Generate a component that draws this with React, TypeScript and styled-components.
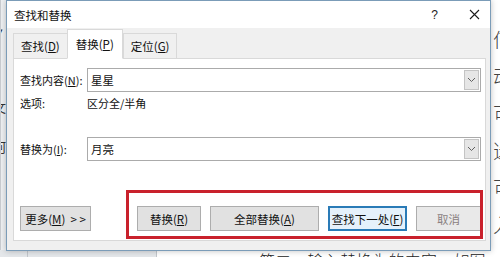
import styled, { createGlobalStyle } from "styled-components";

const GlobalStyle = createGlobalStyle`
  html, body { margin: 0; padding: 0; }
  body {
    font-family: "Noto Sans CJK SC", "Noto Sans", sans-serif;
    font-size: 11px;
    color: #000;
  }
`;

const CJK = `"Noto Sans CJK SC", "Noto Sans", sans-serif`;

const rightEnds = ["何", "动", "可", "选", "可", "入"];

function Chevron() {
  return (
    <svg width="9" height="6" viewBox="0 0 9 6">
      <path d="M1 1 L4.5 4.5 L8 1" fill="none" stroke="#606060" strokeWidth="1" />
    </svg>
  );
}

function CloseIcon() {
  return (
    <svg width="11" height="11" viewBox="0 0 11 11">
      <path d="M1 1 L10 10 M10 1 L1 10" stroke="#1a1a1a" strokeWidth="1.1" />
    </svg>
  );
}

function Combo({ value }: { value: string }) {
  return (
    <StyledCombo>
      <StyledComboText>{value}</StyledComboText>
      <StyledDrop>
        <Chevron />
      </StyledDrop>
    </StyledCombo>
  );
}

export default function App() {
  return (
    <>
      <GlobalStyle />
      <StyledPage>
        <StyledDoc>
          <StyledDocBody>
            <StyledGutter>
              <StyledGutterMark>▾</StyledGutterMark>
              <StyledGutterChar top={64}>文</StyledGutterChar>
              <StyledGutterChar top={26}>何</StyledGutterChar>
            </StyledGutter>
            <StyledDocFill />
            <StyledLineEnds>
              {rightEnds.map((c, i) => (
                <span key={i}>{c}</span>
              ))}
            </StyledLineEnds>
          </StyledDocBody>
          <StyledDocFoot>
            <StyledFootCell width={27} />
            <StyledFootCell width={128} />
            <StyledFootText>第二、输入替换为的内容，如图</StyledFootText>
          </StyledDocFoot>
        </StyledDoc>

        <StyledDialog>
          <StyledTitleBar>
            <StyledTitle>查找和替换</StyledTitle>
            <StyledTitleButtons>
              <StyledHelp>?</StyledHelp>
              <CloseIcon />
            </StyledTitleButtons>
          </StyledTitleBar>
          <StyledDialogBody>
            <StyledTabs>
              <StyledTab>
                查找(<u>D</u>)
              </StyledTab>
              <StyledTab active>
                替换(<u>P</u>)
              </StyledTab>
              <StyledTab>
                定位(<u>G</u>)
              </StyledTab>
            </StyledTabs>
            <StyledPanel>
              <StyledFieldRow>
                <StyledLabel>
                  查找内容(<u>N</u>):
                </StyledLabel>
                <Combo value="星星" />
              </StyledFieldRow>
              <StyledOptionRow>
                <StyledLabel>选项:</StyledLabel>
                <span>区分全/半角</span>
              </StyledOptionRow>
              <StyledFieldRow>
                <StyledLabel>
                  替换为(<u>I</u>):
                </StyledLabel>
                <Combo value="月亮" />
              </StyledFieldRow>
              <StyledButtonBar>
                <StyledButton width={71}>
                  更多(<u>M</u>)&nbsp;&nbsp;&gt; &gt;
                </StyledButton>
                <StyledActions>
                  <StyledButton width={64}>
                    替换(<u>R</u>)
                  </StyledButton>
                  <StyledButton width={109}>
                    全部替换(<u>A</u>)
                  </StyledButton>
                  <StyledButton width={79} primary>
                    查找下一处(<u>F</u>)
                  </StyledButton>
                  <StyledButton width={65} muted>
                    取消
                  </StyledButton>
                </StyledActions>
              </StyledButtonBar>
            </StyledPanel>
          </StyledDialogBody>
        </StyledDialog>

        <StyledHighlight />
      </StyledPage>
    </>
  );
}

const StyledPage = styled.div`
  position: relative;
  width: 500px;
  height: 257px;
  overflow: hidden;
  background: #ffffff;
`;

const StyledDoc = styled.div`
  display: flex;
  flex-direction: column;
  height: 100%;
`;

const StyledDocBody = styled.div`
  flex: 1;
  display: flex;
`;

const StyledGutter = styled.div`
  width: 6px;
  background: #eef0f2;
  border-left: 1px solid #c9ccd0;
  display: flex;
  flex-direction: column;
  overflow: hidden;
`;

const StyledGutterMark = styled.span`
  margin-top: 26px;
  font-size: 9px;
  color: #333;
  line-height: 10px;
  margin-left: -3px;
`;

const StyledGutterChar = styled.span<{ top: number }>`
  margin-top: ${(p) => p.top}px;
  margin-left: -8px;
  font-size: 13px;
  line-height: 14px;
  color: #333;
`;

const StyledDocFill = styled.div`
  flex: 1;
`;

const StyledLineEnds = styled.div`
  width: 8px;
  display: flex;
  flex-direction: column;
  gap: 17px;
  padding-top: 30px;
  overflow: hidden;
  font-family: ${CJK};
  font-size: 20px;
  line-height: 20px;
  font-weight: 300;
  color: #444;
  span {
    margin-left: 1px;
  }
`;

const StyledDocFoot = styled.div`
  height: 7px;
  display: flex;
  background: #ffffff;
`;

const StyledFootCell = styled.div<{ width: number }>`
  width: ${(p) => p.width}px;
  background: #e4e7ea;
  border-right: 1px solid #c3c7cc;
`;

const StyledFootText = styled.div`
  margin-left: 102px;
  padding-top: 1px;
  font-size: 16px;
  line-height: 18px;
  font-weight: 300;
  letter-spacing: 0.2px;
  color: #222;
  white-space: nowrap;
`;

const StyledDialog = styled.div`
  position: absolute;
  left: 6px;
  top: 0;
  width: 483px;
  height: 249px;
  display: flex;
  flex-direction: column;
  background: #f0f0f0;
  border: 1px solid #7b9cb8;
  box-shadow: 0 0 6px rgba(0, 0, 0, 0.25);
`;

const StyledTitleBar = styled.div`
  height: 27px;
  display: flex;
  align-items: center;
  justify-content: space-between;
  background: #ffffff;
  padding: 0 10px 0 7px;
`;

const StyledTitle = styled.span`
  font-size: 11.5px;
  color: #111;
`;

const StyledTitleButtons = styled.div`
  display: flex;
  align-items: center;
  gap: 31px;
`;

const StyledHelp = styled.span`
  font-family: "Liberation Sans", sans-serif;
  font-size: 12px;
  color: #222;
`;

const StyledDialogBody = styled.div`
  flex: 1;
  display: flex;
  flex-direction: column;
  padding: 1px 4px 9px 6px;
`;

const StyledTabs = styled.div`
  display: flex;
  align-items: flex-end;
  height: 30px;
  margin-bottom: -1px;
  position: relative;
  z-index: 1;
`;

const StyledTab = styled.div<{ active?: boolean }>`
  height: ${(p) => (p.active ? 30 : 26)}px;
  padding: 0 ${(p) => (p.active ? 8 : 7)}px;
  display: flex;
  align-items: center;
  box-sizing: border-box;
  background: ${(p) => (p.active ? "#ffffff" : "#f0f0f0")};
  border: 1px solid #d9d9d9;
  border-bottom: ${(p) => (p.active ? "1px solid #ffffff" : "1px solid #d9d9d9")};
  margin-left: ${(p) => (p.active ? -1 : 0)}px;
  font-size: 11.5px;
  color: #111;
  & + & {
    border-left-width: ${(p) => (p.active ? 1 : 0)}px;
  }
`;

const StyledPanel = styled.div`
  flex: 1;
  display: flex;
  flex-direction: column;
  background: #ffffff;
  border: 1px solid #d9d9d9;
  padding: 9px 4px 0 6px;
`;

const StyledFieldRow = styled.div`
  display: flex;
  align-items: center;
  height: 24px;
`;

const StyledOptionRow = styled.div`
  display: flex;
  align-items: center;
  height: 22px;
  margin-bottom: 23px;
  font-size: 11px;
  color: #111;
`;

const StyledLabel = styled.span`
  width: 67px;
  flex-shrink: 0;
  white-space: nowrap;
  font-size: 11px;
  color: #111;
`;

const StyledCombo = styled.div`
  flex: 1;
  height: 24px;
  box-sizing: border-box;
  display: flex;
  align-items: center;
  border: 1px solid #ababab;
  background: #ffffff;
  padding: 1px;
`;

const StyledComboText = styled.span`
  flex: 1;
  padding-left: 2px;
  font-size: 11.5px;
  color: #111;
`;

const StyledDrop = styled.div`
  width: 15px;
  height: 20px;
  box-sizing: border-box;
  display: flex;
  align-items: center;
  justify-content: center;
  background: #e6e6e6;
  border: 1px solid #c4c4c4;
`;

const StyledButtonBar = styled.div`
  display: flex;
  justify-content: space-between;
  margin-top: 45px;
`;

const StyledActions = styled.div`
  display: flex;
  gap: 9px;
`;

const StyledButton = styled.div<{ width: number; primary?: boolean; muted?: boolean }>`
  width: ${(p) => p.width}px;
  height: 25px;
  box-sizing: border-box;
  display: flex;
  align-items: center;
  justify-content: center;
  white-space: nowrap;
  font-size: 11.5px;
  color: ${(p) => (p.muted ? "#8a7f80" : "#111")};
  background: ${(p) => (p.primary ? "#e5f1fb" : p.muted ? "#e9e9e9" : "#e1e1e1")};
  border: ${(p) => (p.primary ? "2px solid #2a7bb7" : "1px solid #adadad")};
`;

const StyledHighlight = styled.div`
  position: absolute;
  left: 126px;
  top: 190px;
  width: 357px;
  height: 49px;
  box-sizing: border-box;
  border: 3px solid #c9212c;
  pointer-events: none;
`;
